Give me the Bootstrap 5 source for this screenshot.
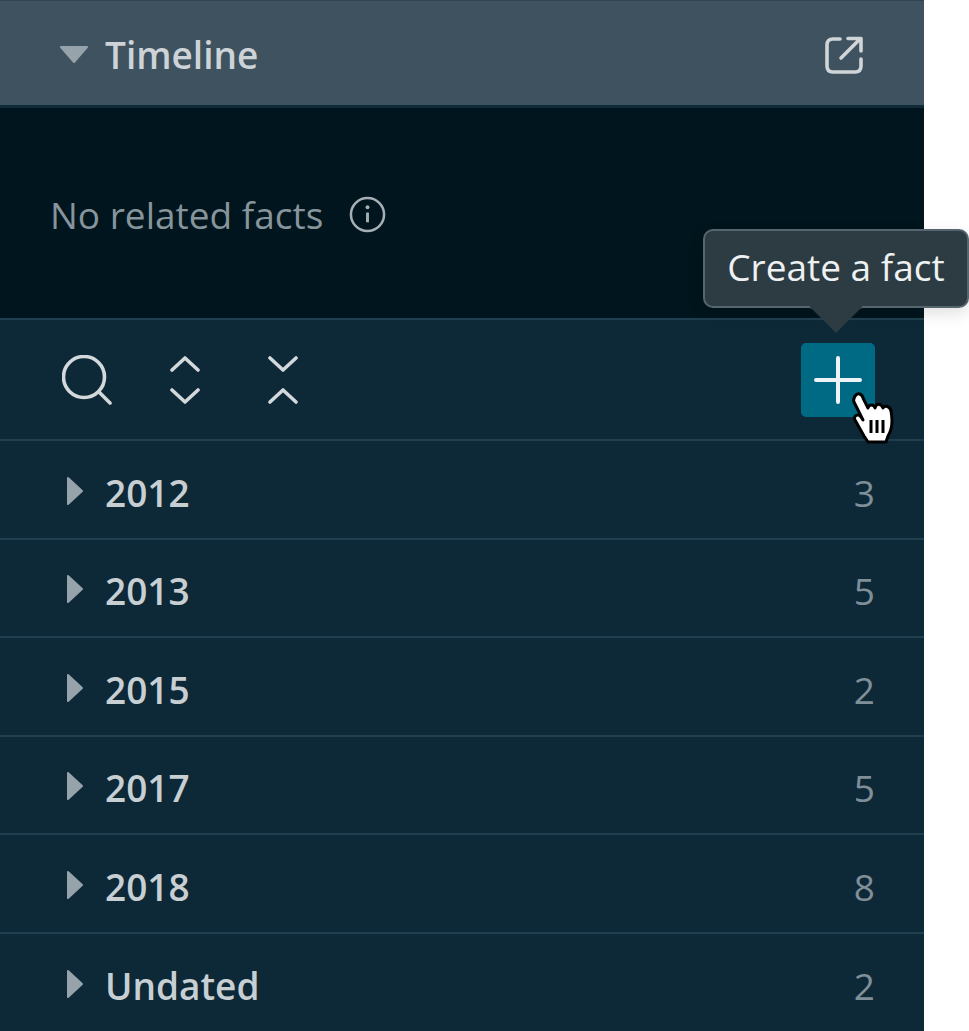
<!DOCTYPE html>
<html lang="en">
<head>
<meta charset="utf-8">
<title>Timeline</title>
<link rel="stylesheet" href="https://cdn.jsdelivr.net/npm/bootstrap@5.3.0/dist/css/bootstrap.min.css">
<style>
html,body{height:100%;overflow:hidden}
body{background:#fff;font-family:"Open Sans","Noto Sans",sans-serif;color:#d3d8db}
.tl-panel{width:924px;height:1031px;background:#0d2837;position:relative;overflow:hidden}
.tl-head{height:108px;background:#3e5260;border-bottom:3px solid #0f2a38;padding:3px 61px 0 59px;border-top:1px solid #2f4350}
.tl-title{font-size:37px;font-weight:600;color:#cdd3d6;margin-left:16px;line-height:1}
.tl-empty{height:210px;background:#00151d;padding:3px 0 0 50px}
.tl-empty-text{font-size:37px;color:#87949b;margin-right:26px;line-height:1}
.tl-tools{height:123px;border-top:2px solid #1f3f50;border-bottom:2px solid #1f3f50;padding:0 49px 0 62px}
.tl-tools svg{display:block}
.tl-gap-a{margin-left:58px}
.tl-gap-b{margin-left:68px}
.tl-add{width:74px;height:74px;background:#006a85;border-radius:5px;border:0;padding:0;margin-left:auto}
.tl-row{height:98.5px;border-bottom:2px solid #1f3f50;padding:0 49px 0 66px}
.tl-row:last-child{border-bottom:0}
.tl-row>svg{margin-top:3px}
.tl-year{font-size:37px;font-weight:600;color:#c8cfd3;margin-left:21px;line-height:1;padding-top:6px}
.tl-count{font-size:37px;color:#7f8f98;margin-left:auto;line-height:1;padding-top:6px}
.tl-tip{position:absolute;left:703px;top:229px;width:266px;height:79px;background:#2d3b43;border:2px solid #56666f;border-radius:10px;color:#eef1f2;font-size:37px;padding-bottom:4px;box-shadow:0 6px 16px rgba(0,0,0,.12)}
.tl-tip-arrow{position:absolute;left:808px;top:305px;display:block}
.tl-cursor{position:absolute;left:850px;top:392px;display:block}
</style>
</head>
<body>
<div class="tl-panel">
  <div class="tl-head d-flex align-items-center">
    <svg width="30" height="20" viewBox="0 0 30 20"><path d="M2 2H28L15 17Z" fill="#97a3aa" stroke="#97a3aa" stroke-width="2" stroke-linejoin="round"/></svg>
    <span class="tl-title">Timeline</span>
    <svg class="ms-auto" width="38" height="38" viewBox="0 0 38 38" fill="none" stroke="#d0d5d8" stroke-width="3.600" stroke-linecap="round" stroke-linejoin="round"><path d="M15 3H8Q2 3 2 9V30Q2 36 8 36H30Q36 36 36 30V23"/><path d="M16 22L35 3M23 2.500H36V15"/></svg>
  </div>
  <div class="tl-empty d-flex align-items-center">
    <span class="tl-empty-text">No related facts</span>
    <svg width="37" height="37" viewBox="0 0 38 38" fill="none"><circle cx="19" cy="19" r="17" stroke="#a5b0b6" stroke-width="2.600"/><path d="M19 17V27" stroke="#a5b0b6" stroke-width="3"/><circle cx="19" cy="11.500" r="2" fill="#a5b0b6"/></svg>
  </div>
  <div class="tl-tools d-flex align-items-center">
    <svg width="50" height="50" viewBox="0 0 50 50" fill="none" stroke="#d3d8db" stroke-width="3.600" stroke-linecap="round"><circle cx="22" cy="22" r="20.500"/><path d="M37 37L48 48"/></svg>
    <svg class="tl-gap-a" width="30" height="50" viewBox="0 0 30 50" fill="none" stroke="#d3d8db" stroke-width="3.600" stroke-linecap="round" stroke-linejoin="round"><path d="M2 15L15 3L28 15M2 35L15 47L28 35"/></svg>
    <svg class="tl-gap-b" width="30" height="50" viewBox="0 0 30 50" fill="none" stroke="#d3d8db" stroke-width="3.600" stroke-linecap="round" stroke-linejoin="round"><path d="M2 3L15 15L28 3M2 47L15 35L28 47"/></svg>
    <button class="tl-add d-flex align-items-center justify-content-center" type="button" aria-label="Create a fact">
      <svg width="48" height="48" viewBox="0 0 48 48" stroke="#eef3f5" stroke-width="4" stroke-linecap="round"><path d="M24 2V46M2 24H46"/></svg>
    </button>
  </div>
  <div class="tl-row d-flex align-items-center"><svg width="18" height="30" viewBox="0 0 18 30"><path d="M2 2L16 15L2 28Z" fill="#97a3aa" stroke="#97a3aa" stroke-width="2" stroke-linejoin="round"/></svg><span class="tl-year">2012</span><span class="tl-count">3</span></div>
  <div class="tl-row d-flex align-items-center"><svg width="18" height="30" viewBox="0 0 18 30"><path d="M2 2L16 15L2 28Z" fill="#97a3aa" stroke="#97a3aa" stroke-width="2" stroke-linejoin="round"/></svg><span class="tl-year">2013</span><span class="tl-count">5</span></div>
  <div class="tl-row d-flex align-items-center"><svg width="18" height="30" viewBox="0 0 18 30"><path d="M2 2L16 15L2 28Z" fill="#97a3aa" stroke="#97a3aa" stroke-width="2" stroke-linejoin="round"/></svg><span class="tl-year">2015</span><span class="tl-count">2</span></div>
  <div class="tl-row d-flex align-items-center"><svg width="18" height="30" viewBox="0 0 18 30"><path d="M2 2L16 15L2 28Z" fill="#97a3aa" stroke="#97a3aa" stroke-width="2" stroke-linejoin="round"/></svg><span class="tl-year">2017</span><span class="tl-count">5</span></div>
  <div class="tl-row d-flex align-items-center"><svg width="18" height="30" viewBox="0 0 18 30"><path d="M2 2L16 15L2 28Z" fill="#97a3aa" stroke="#97a3aa" stroke-width="2" stroke-linejoin="round"/></svg><span class="tl-year">2018</span><span class="tl-count">8</span></div>
  <div class="tl-row d-flex align-items-center"><svg width="18" height="30" viewBox="0 0 18 30"><path d="M2 2L16 15L2 28Z" fill="#97a3aa" stroke="#97a3aa" stroke-width="2" stroke-linejoin="round"/></svg><span class="tl-year">Undated</span><span class="tl-count">2</span></div>
</div>
<div class="tl-tip d-flex align-items-center justify-content-center">Create a fact</div>
<svg class="tl-tip-arrow" width="56" height="30" viewBox="0 0 56 30"><path d="M2 2L28 28L54 2Z" fill="#2d3b43"/><path d="M2 0H54V4H2Z" fill="#2d3b43"/></svg>
<svg class="tl-cursor" width="46" height="52" viewBox="0 0 46 52"><path d="M5 4C8 0 12 2 13 6L18 16C19 12 24 12 25 16C26 11 31 11 33 16C35 13 40 14 41 19C43 30 42 38 38 44L36 50H18L14 44L5 28C3 24 8 21 11 25L13 28L4 10C3 8 4 6 5 4Z" fill="#fff" stroke="#000" stroke-width="3" stroke-linejoin="round"/><path d="M21 28V41M27 28V41M33 28V41" stroke="#000" stroke-width="3"/></svg>
</body>
</html>
